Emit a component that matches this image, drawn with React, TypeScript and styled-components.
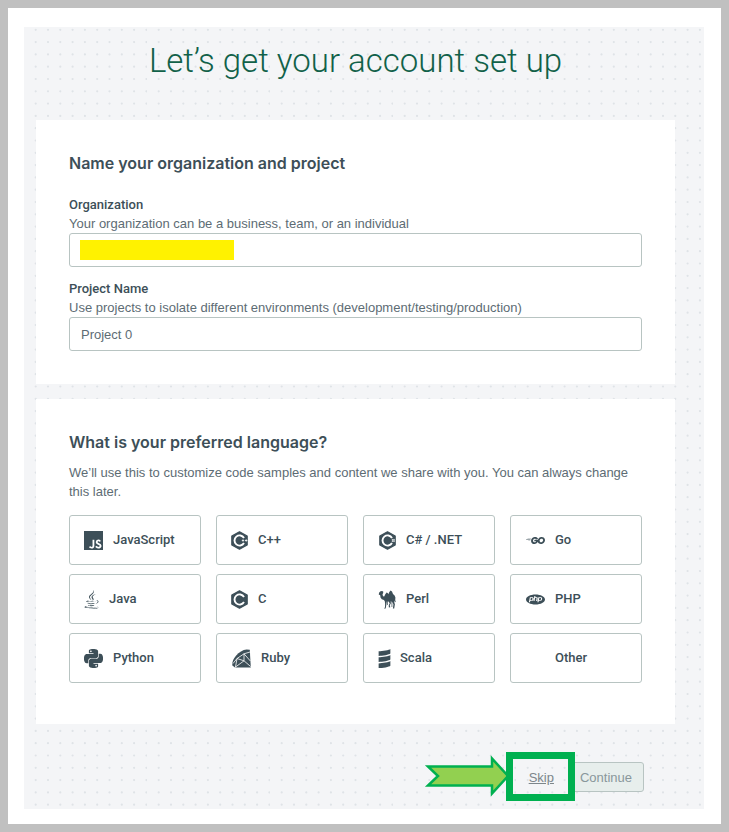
import React, { ReactNode } from "react";
import styled, { createGlobalStyle } from "styled-components";
import { FaJava } from "react-icons/fa";
import { SiGo, SiJavascript, SiPhp, SiPython, SiScala } from "react-icons/si";

const SANS = `"Liberation Sans", Arial, sans-serif`;
const ROBOTO = `Roboto, "Liberation Sans", sans-serif`;
const INTER = `Inter, "Liberation Sans", sans-serif`;
const INK = "#3d4f58";
const BORDER = "#b8c4c2";

/* One repeat of the dotted backdrop: ten by ten dots in a 123px tile. */
const dotTile = (() => {
  const dots: string[] = [];
  for (let row = 0; row < 10; row++) {
    for (let col = 0; col < 10; col++) {
      const x = (col * 12.3 + 11.7).toFixed(1);
      const y = (row * 12.3 + 2.8).toFixed(1);
      dots.push(`<circle cx='${x}' cy='${y}' r='1.1' fill='#dfe3e7'/>`);
    }
  }
  const svg = `<svg xmlns='http://www.w3.org/2000/svg' width='123' height='123'>${dots.join("")}</svg>`;
  return `url("data:image/svg+xml,${encodeURIComponent(svg).replace(/'/g, "%27")}")`;
})();

const GlobalStyle = createGlobalStyle`
  * { box-sizing: border-box; }
  body { margin: 0; background: #c0c0c0; font-family: ${SANS}; color: #5d6c74; }
`;

const Frame = styled.div`
  margin: 8px;
  padding: 19px 17px 15px 16px;
  background: #fff;
`;

const Panel = styled.main`
  padding: 14px 29px 17px 12px;
  background: #f4f5f7 ${dotTile} 0 0 / 123px 123px;
`;

const PageTitle = styled.h1`
  margin: 0 0 39px;
  font: 300 33px/40px ${ROBOTO};
  color: #116149;
  text-align: center;
`;

const Card = styled.section<{ $bottom: number }>`
  padding: 31px 33px ${(p) => p.$bottom}px;
  background: #fff;

  & + & {
    margin-top: 15px;
  }
`;

const CardTitle = styled.h2`
  margin: 0;
  font: 600 16px/24px ${INTER};
  color: ${INK};
`;

const Fields = styled.div`
  display: flex;
  flex-direction: column;
  gap: 13px;
  margin-top: 21px;
`;

const Field = styled.div`
  display: flex;
  flex-direction: column;
`;

const Label = styled.label`
  font: 500 13px/18px ${ROBOTO};
  color: ${INK};
`;

const Hint = styled.span`
  font-size: 13px;
  line-height: 19px;
`;

const InputWrap = styled.div`
  position: relative;
  display: flex;
`;

const TextInput = styled.input`
  width: 100%;
  height: 34px;
  padding: 0 11px;
  border: 1px solid ${BORDER};
  border-radius: 3px;
  background: #fff;
  font: 13px ${SANS};
  color: #5d6c74;
`;

const Redaction = styled.span`
  position: absolute;
  left: 11px;
  top: 7px;
  width: 154px;
  height: 20px;
  background: #fff200;
`;

const Intro = styled.p`
  margin: 9px 0 14px;
  font-size: 13px;
  line-height: 19px;
`;

const LanguageGrid = styled.div`
  display: grid;
  grid-template-columns: repeat(4, 1fr);
  gap: 9px 15px;
`;

const LanguageButton = styled.button`
  display: flex;
  align-items: center;
  gap: 10px;
  height: 50px;
  padding: 0 14px;
  border: 1px solid ${BORDER};
  border-radius: 3px;
  background: #fff;
  font: 500 13px/18px ${ROBOTO};
  color: ${INK};
`;

const IconSlot = styled.span<{ $width: number }>`
  display: flex;
  justify-content: center;
  flex: none;
  width: ${(p) => p.$width}px;

  svg {
    flex: none;
    width: 19px;
    height: 19px;
  }
`;

const Footer = styled.footer`
  display: flex;
  justify-content: flex-end;
  margin: 38px 31px 0 0;
`;

const SkipArea = styled.div`
  position: relative;
  display: flex;
  align-items: center;
  padding: 0 14px;
`;

const SkipLink = styled.a`
  font-size: 13px;
  line-height: 19px;
  color: #7d868b;
  text-decoration: underline;
`;

const Highlight = styled.span`
  position: absolute;
  inset: -10px -7px -9px -9px;
  border: 7px solid #00b050;
  pointer-events: none;
`;

const Arrow = styled.svg`
  position: absolute;
  right: calc(100% + 5px);
  top: -8px;
  width: 86px;
  height: 44px;
  pointer-events: none;
`;

const ContinueButton = styled.button`
  height: 30px;
  padding: 0 11px;
  border: 1px solid ${BORDER};
  border-radius: 3px;
  background: #e7eeec;
  font: 13px ${SANS};
  color: #89979b;
`;

/* Hexagonal badge with a ringed letter-like mark and a solid centre. */
const HexBadge = ({ children }: { children?: ReactNode }) => (
  <svg viewBox="0 0 19 19" aria-hidden="true">
    <path
      d="M9.5 .8 17.2 5v9L9.5 18.2 1.8 14V5z"
      fill="currentColor"
      stroke="currentColor"
      strokeWidth="1.2"
      strokeLinejoin="round"
    />
    <path d="M14 6.9A5.100 5.100 0 1 0 14 12.100" fill="none" stroke="#fff" strokeWidth="1.900" />
    {children}
  </svg>
);

const CppIcon = () => (
  <HexBadge>
    <path d="M11.800 9.500h2.400M13 8.300v2.400M15 9.500h2.400M16.200 8.300v2.400" stroke="#fff" strokeWidth=".8" />
  </HexBadge>
);

const CSharpIcon = () => (
  <HexBadge>
    <path
      d="M14.600 7.900v3.200M16 7.900v3.200M13.700 8.800h3.200M13.700 10.200h3.200"
      stroke="#fff"
      strokeWidth=".6"
    />
  </HexBadge>
);

const RubyIcon = () => (
  <svg viewBox="0 0 19 19" aria-hidden="true">
    <path
      d="M.3 16.4C0 12.6 1.4 9.600 4 6.700 7 3.400 10.800 .800 14.600 .600L17.800 .800 18.800 18.400 3 18.600Z"
      fill="currentColor"
    />
    <path
      d="M1 14.500 5 9.500 12 4.800 18 3M5 9.500l7 2.300V4.800M12 11.800 3 18.400M12 11.800 18.600 17.500M12 4.800 18.400 12M5 9.500l-1.500 8.500"
      fill="none"
      stroke="#fff"
      strokeWidth=".8"
    />
  </svg>
);

const CamelIcon = () => (
  <svg viewBox="0 0 19 19" aria-hidden="true">
    <path
      d="M1.200 2.600 2.500 1.200 4.200 .900 5.300 1.800 5.100 3.200 4.500 4.300 5 6.200 6.200 6.500 7.300 4.300 8.600 2.400 9.700 3.100 10.300 4.300 11.200 2.300 12.500 .400 14 1.400 15 4 16.600 5.500 17.400 7.500 17.200 10.200 17.800 11.500 17.300 12.200 16.700 10.500 16.300 12.500 16.900 14.300 16.200 18.400H14.900L15.400 14.600 14.600 12.500 12.700 11.300 12.900 13.200 11.800 15.200 12.300 17.200 10.900 17.600 10.700 15.400 11.700 13.300 10.500 11.500 8.800 11.600 8.400 14.400 7.700 18.600H6L7 17.300 7.100 13.800 6.800 11.300 5.900 10 3.800 9.200 2.500 7.500 2.200 5.200 .700 4.500Z"
      fill="currentColor"
    />
    <path d="M9.500 11v4M13.900 12v5" stroke="currentColor" strokeWidth=".7" />
  </svg>
);

const languages: { name: string; width: number; icon?: ReactNode }[] = [
  { name: "JavaScript", width: 19, icon: <SiJavascript /> },
  { name: "C++", width: 17, icon: <CppIcon /> },
  { name: "C# / .NET", width: 18, icon: <CSharpIcon /> },
  { name: "Go", width: 20, icon: <SiGo /> },
  { name: "Java", width: 15, icon: <FaJava /> },
  { name: "C", width: 17, icon: <HexBadge /> },
  { name: "Perl", width: 18, icon: <CamelIcon /> },
  { name: "PHP", width: 20, icon: <SiPhp /> },
  { name: "Python", width: 19, icon: <SiPython /> },
  { name: "Ruby", width: 20, icon: <RubyIcon /> },
  { name: "Scala", width: 12, icon: <SiScala /> },
  { name: "Other", width: 20 },
];

export default function App() {
  return (
    <>
      <GlobalStyle />
      <Frame>
        <Panel>
          <PageTitle>Let’s get your account set up</PageTitle>

          <Card $bottom={33}>
            <CardTitle>Name your organization and project</CardTitle>
            <Fields>
              <Field>
                <Label htmlFor="organization">Organization</Label>
                <Hint id="organization-hint">
                  Your organization can be a business, team, or an individual
                </Hint>
                <InputWrap>
                  <TextInput id="organization" aria-describedby="organization-hint" />
                  <Redaction />
                </InputWrap>
              </Field>
              <Field>
                <Label htmlFor="project">Project Name</Label>
                <Hint id="project-hint">
                  Use projects to isolate different environments (development/testing/production)
                </Hint>
                <InputWrap>
                  <TextInput id="project" aria-describedby="project-hint" defaultValue="Project 0" />
                </InputWrap>
              </Field>
            </Fields>
          </Card>

          <Card $bottom={41}>
            <CardTitle>What is your preferred language?</CardTitle>
            <Intro>
              We’ll use this to customize code samples and content we share with you. You can always
              change this later.
            </Intro>
            <LanguageGrid>
              {languages.map(({ name, width, icon }) => (
                <LanguageButton key={name} type="button">
                  <IconSlot $width={width}>{icon}</IconSlot>
                  {name}
                </LanguageButton>
              ))}
            </LanguageGrid>
          </Card>

          <Footer>
            <ContinueGroup />
          </Footer>
        </Panel>
      </Frame>
    </>
  );
}

function ContinueGroup() {
  return (
    <>
      <SkipArea>
        <SkipLink href="#skip">Skip</SkipLink>
        <Arrow viewBox="0 0 86 44" aria-hidden="true">
          <path
            d="M4 12.500H68V4.500L84 22 68 39.500V31.500H4L14 22Z"
            fill="#92d050"
            stroke="#00b050"
            strokeWidth="2.500"
          />
        </Arrow>
        <Highlight />
      </SkipArea>
      <ContinueButton type="button" disabled>
        Continue
      </ContinueButton>
    </>
  );
}
